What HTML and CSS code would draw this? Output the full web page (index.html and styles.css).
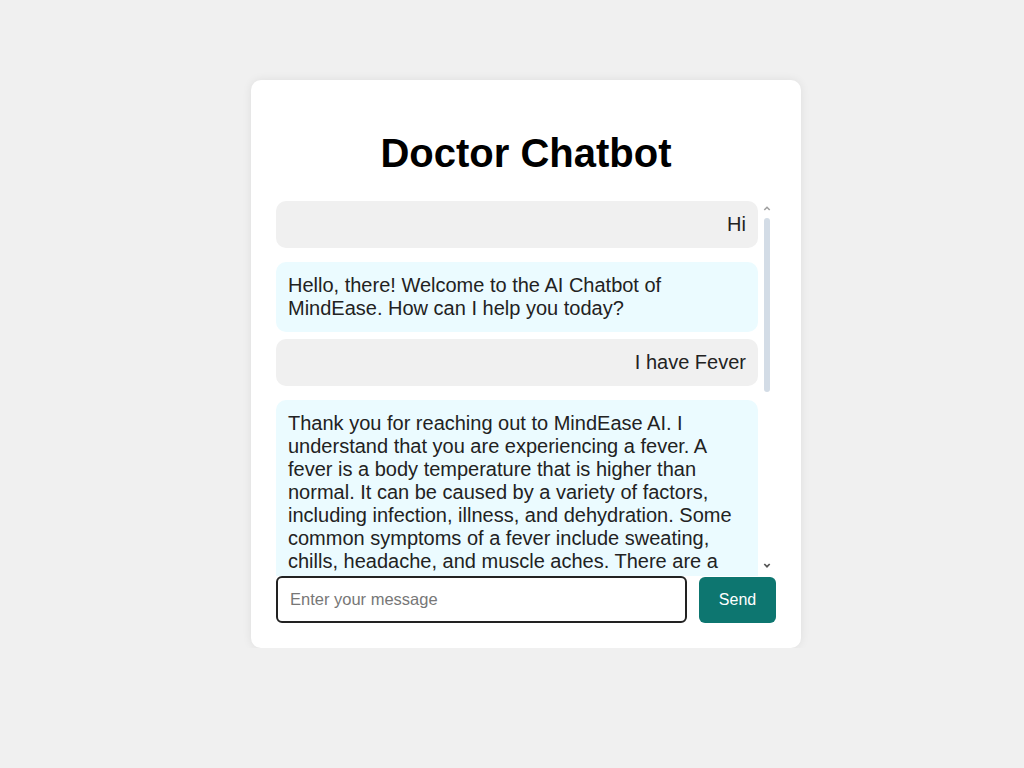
FILE: index.html
```html
<!DOCTYPE html>
<html lang="en">
<head>
<meta charset="utf-8">
<title>Doctor Chatbot</title>
<link rel="stylesheet" href="styles.css">
</head>
<body>
<div class="page">
  <div class="card">
    <h1 class="title">Doctor Chatbot</h1>
    <div class="chat-box">
      <div class="chat">
        <div class="msg user">Hi</div>
        <div class="msg bot">Hello, there! Welcome to the AI Chatbot of MindEase. How can I help you today?</div>
        <div class="msg user">I have Fever</div>
        <div class="msg bot">Thank you for reaching out to MindEase AI. I understand that you are experiencing a fever. A fever is a body temperature that is higher than normal. It can be caused by a variety of factors, including infection, illness, and dehydration. Some common symptoms of a fever include sweating, chills, headache, and muscle aches. There are a few things you can do to help reduce your fever and feel more comfortable.</div>
      </div>
      <div class="scrollbar" aria-hidden="true">
        <svg class="arrow" width="18" height="14" viewBox="0 0 18 14"><path d="M6.3 9 L9 6.3 L11.7 9" fill="none" stroke="#a0a0a0" stroke-width="1.6"/></svg>
        <div class="track"><div class="thumb"></div></div>
        <svg class="arrow" width="18" height="14" viewBox="0 0 18 14"><path d="M6.3 4 L9 6.7 L11.7 4" fill="none" stroke="#555" stroke-width="1.7"/></svg>
      </div>
    </div>
    <form class="composer">
      <input class="input" type="text" placeholder="Enter your message" autofocus>
      <button class="send" type="button">Send</button>
    </form>
  </div>
</div>
</body>
</html>
```
FILE: styles.css
```css
html, body {
  margin: 0;
  padding: 0;
  background: #f0f0f0;
  font-family: "Liberation Sans", Arial, sans-serif;
  color: #222;
}

.page {
  display: flex;
  justify-content: center;
  padding: 80px 0 0 28px;
}

.card {
  width: 500px;
  height: 518px;
  padding: 25px;
  background: #fff;
  border-radius: 10px;
  box-shadow: 0 0 10px rgba(0, 0, 0, 0.08);
  display: flex;
  flex-direction: column;
}

.title {
  margin: 25px 0;
  font-size: 40px;
  line-height: 46px;
  font-weight: bold;
  text-align: center;
  color: #000;
}

.chat-box {
  display: flex;
  height: 375px;
  flex: none;
}

.chat {
  flex: 0 0 482px;
  overflow: hidden;
}

.scrollbar {
  flex: 1;
  display: flex;
  flex-direction: column;
  padding-bottom: 2px;
}

.arrow {
  display: block;
  flex: none;
}

.track {
  flex: 1;
  padding: 3px 0 0 6px;
}

.thumb {
  width: 6px;
  height: 174px;
  border-radius: 3px;
  background: #d3dce6;
}

.msg {
  margin: 0 0 7px;
  padding: 12px;
  border-radius: 10px;
  font-size: 20px;
  line-height: 23px;
}

.user {
  background: #f0f0f0;
  text-align: right;
}

.bot {
  margin-top: 14px;
  background: #ebfbff;
  text-align: left;
}

.composer {
  display: flex;
  gap: 12px;
  margin: 0;
}

.input {
  flex: 1;
  height: 47px;
  box-sizing: border-box;
  padding: 0 12px;
  border: 2px solid #222;
  border-radius: 6px;
  font-family: "Liberation Sans", Arial, sans-serif;
  font-size: 16.5px;
  color: #222;
  outline: none;
}

.input::placeholder {
  color: #777;
}

.send {
  width: 77px;
  height: 46px;
  margin-top: 1px;
  border: none;
  border-radius: 6px;
  background: #0d7670;
  color: #fff;
  font-family: "Liberation Sans", Arial, sans-serif;
  font-size: 16px;
  cursor: pointer;
}
```
